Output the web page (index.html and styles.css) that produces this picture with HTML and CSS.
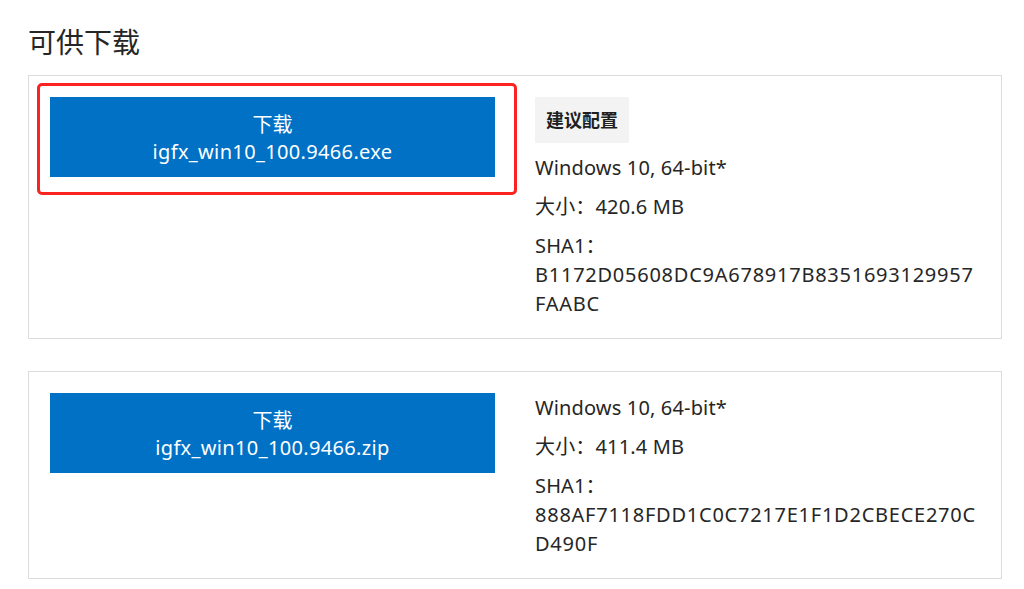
FILE: index.html
```html
<!DOCTYPE html>
<html lang="zh-CN">
<head>
<meta charset="utf-8">
<title>可供下载</title>
<link rel="stylesheet" href="styles.css">
</head>
<body>
<main class="page">
  <h2 class="title">可供下载</h2>

  <section class="card">
    <div class="action">
      <a class="btn" href="#">
        <span class="btn-line">下载</span>
        <span class="btn-line file">igfx_win10_100.9466.exe</span>
      </a>
      <span class="highlight"></span>
    </div>
    <div class="info">
      <span class="badge">建议配置</span>
      <p class="row">Windows 10, 64-bit*</p>
      <p class="row">大小：420.6 MB</p>
      <p class="row hash">SHA1：<br><span class="code">B1172D05608DC9A678917B8351693129957FAABC</span></p>
    </div>
  </section>

  <section class="card">
    <div class="action">
      <a class="btn" href="#">
        <span class="btn-line">下载</span>
        <span class="btn-line file">igfx_win10_100.9466.zip</span>
      </a>
    </div>
    <div class="info">
      <p class="row">Windows 10, 64-bit*</p>
      <p class="row">大小：411.4 MB</p>
      <p class="row hash">SHA1：<br><span class="code">888AF7118FDD1C0C7217E1F1D2CBECE270CD490F</span></p>
    </div>
  </section>
</main>
</body>
</html>
```

FILE: styles.css
```css
* { box-sizing: border-box; }

html, body {
  margin: 0;
  padding: 0;
  background: #ffffff;
}

body {
  font-family: "Noto Sans", "Noto Sans CJK SC", sans-serif;
  color: #262626;
}

.page {
  padding: 22px 22px 0 28px;
}

.title {
  margin: 0 0 13px 0;
  font-size: 28px;
  font-weight: 400;
  line-height: 40px;
  color: #262626;
}

.card {
  position: relative;
  display: flex;
  gap: 40px;
  border: 1px solid #dcdcdc;
  padding: 21px 21px 20px 21px;
  margin-bottom: 32px;
}

.action {
  position: relative;
  flex: 0 0 445px;
}

.btn {
  display: flex;
  flex-direction: column;
  align-items: center;
  justify-content: center;
  width: 445px;
  height: 80px;
  background: #0071c5;
  color: #ffffff;
  text-decoration: none;
  font-size: 20px;
  line-height: 27px;
  padding-top: 1px;
}

.file {
  letter-spacing: 0.35px;
}

.highlight {
  position: absolute;
  left: -13px;
  top: -14px;
  width: 480px;
  height: 112px;
  border: 3px solid #fb2222;
  border-radius: 5px;
  pointer-events: none;
}

.info {
  flex: 1;
  min-width: 0;
  display: flex;
  flex-direction: column;
  align-items: flex-start;
  gap: 10px;
}

.badge {
  display: inline-block;
  background: #f3f3f3;
  font-weight: 700;
  font-size: 18px;
  line-height: 26px;
  padding: 10px 11px;
  color: #1f1f1f;
}

.row {
  margin: 0;
  font-size: 20px;
  line-height: 29px;
  letter-spacing: 0.15px;
}

.hash {
  word-break: break-all;
  max-width: 445px;
}

.code {
  letter-spacing: 0.75px;
}
```
